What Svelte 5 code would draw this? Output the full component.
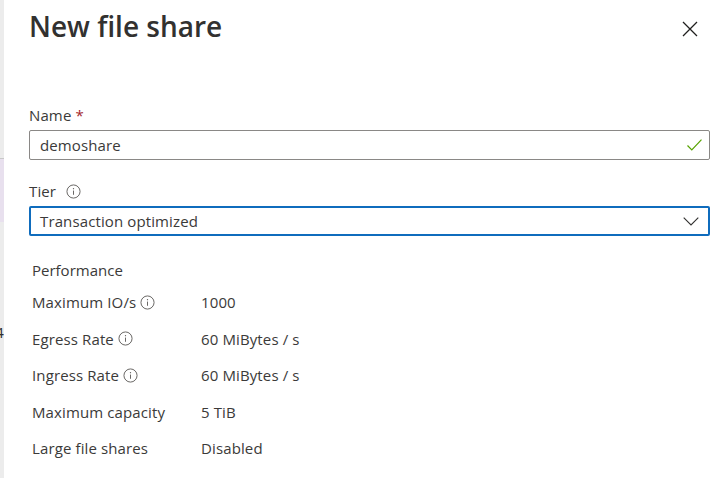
<script>
  const rows = [
    { label: 'Maximum IO/s', info: true, value: '1000' },
    { label: 'Egress Rate', info: true, value: '60 MiBytes / s' },
    { label: 'Ingress Rate', info: true, value: '60 MiBytes / s' },
    { label: 'Maximum capacity', info: false, value: '5 TiB' },
    { label: 'Large file shares', info: false, value: 'Disabled' }
  ];
</script>

{#snippet infoIcon()}
  <svg class="info" width="15" height="15" viewBox="0 0 16 16" fill="none">
    <circle cx="8" cy="8" r="7" stroke="#605e5c" />
    <path d="M8 7v4.5" stroke="#605e5c" />
    <circle cx="8" cy="5" r="0.7" fill="#605e5c" />
  </svg>
{/snippet}

<div class="page">
  <div class="edge">
    <div class="edge-tint"></div>
    <div class="edge-text">4</div>
  </div>
  <div class="panel">
    <header class="panel-header">
      <h1>New file share</h1>
      <button class="close" aria-label="Close">
        <svg width="16" height="16" viewBox="0 0 16 16" fill="none">
          <path d="M1 1l14 14M15 1L1 15" stroke="#201f1e" stroke-width="1.3" />
        </svg>
      </button>
    </header>

    <div class="field name-field">
      <div class="field-label">Name <span class="req">*</span></div>
      <div class="input">
        <span>demoshare</span>
        <svg width="15" height="12" viewBox="0 0 15 12" fill="none">
          <path d="M0.5 6.5l4.3 4.5L14.5 0.7" stroke="#57a300" stroke-width="1.2" />
        </svg>
      </div>
    </div>

    <div class="field tier-field">
      <div class="field-label tier-label">Tier {@render infoIcon()}</div>
      <div class="input select">
        <span>Transaction optimized</span>
        <svg width="16" height="9" viewBox="0 0 16 9" fill="none">
          <path d="M0.7 0.7L8 8l7.3-7.3" stroke="#323130" stroke-width="1.1" />
        </svg>
      </div>
    </div>

    <div class="details">
      <div class="details-title">Performance</div>
      {#each rows as row}
        <div class="row">
          <div class="row-label">{row.label}{#if row.info}{@render infoIcon()}{/if}</div>
          <div class="row-value">{row.value}</div>
        </div>
      {/each}
    </div>
  </div>
</div>

<style>
  :global(body) {
    margin: 0;
    background: #fff;
  }

  .page {
    display: flex;
    width: 722px;
    height: 478px;
    overflow: hidden;
    font-family: 'Open Sans', 'Liberation Sans', sans-serif;
    font-size: 15px;
    letter-spacing: 0.12px;
    color: #3b3a39;
  }

  .edge {
    width: 4px;
    flex: none;
    display: flex;
    flex-direction: column;
    align-items: flex-end;
    overflow: hidden;
    background: #ececec;
  }

  .edge-tint {
    flex: none;
    box-sizing: border-box;
    width: 4px;
    height: 64px;
    margin-top: 158px;
    border-top: 1px solid #c8c8c8;
    background: #e8e0ee;
  }

  .edge-text {
    flex: none;
    margin-top: 100px;
    line-height: 20px;
    color: #323130;
  }

  .panel {
    flex: 1;
    padding: 0 12px 0 25px;
  }

  .panel-header {
    display: flex;
    justify-content: space-between;
    align-items: center;
    height: 51px;
  }

  h1 {
    margin: 0;
    font-size: 28px;
    font-weight: 600;
    letter-spacing: 0;
    color: #323130;
  }

  .close {
    display: flex;
    padding: 0;
    margin: 6px 12px 0 0;
    border: 0;
    background: none;
  }

  .name-field {
    margin-top: 51px;
  }

  .tier-field {
    margin-top: 18px;
  }

  .field-label {
    display: flex;
    align-items: center;
    gap: 4px;
    box-sizing: border-box;
    height: 28px;
    padding-bottom: 2px;
  }

  .tier-label {
    gap: 10px;
  }

  .req {
    color: #a4262c;
  }

  .input {
    display: flex;
    justify-content: space-between;
    align-items: center;
    box-sizing: border-box;
    height: 30px;
    padding: 0 7px 0 10px;
    border: 1px solid #8a8886;
    border-radius: 2px;
  }

  .select {
    border: 2px solid #0f6cbd;
    padding: 0 9px 0 9px;
  }

  .details {
    margin-top: 21px;
    padding-left: 3px;
  }

  .details-title {
    height: 32px;
    line-height: 26px;
    letter-spacing: 0;
  }

  .row {
    display: grid;
    grid-template-columns: 169px 1fr;
    height: 36.5px;
    line-height: 26px;
  }

  .row-label {
    display: flex;
    align-items: center;
    gap: 4px;
    height: 26px;
  }

  .info {
    flex: none;
  }
</style>
